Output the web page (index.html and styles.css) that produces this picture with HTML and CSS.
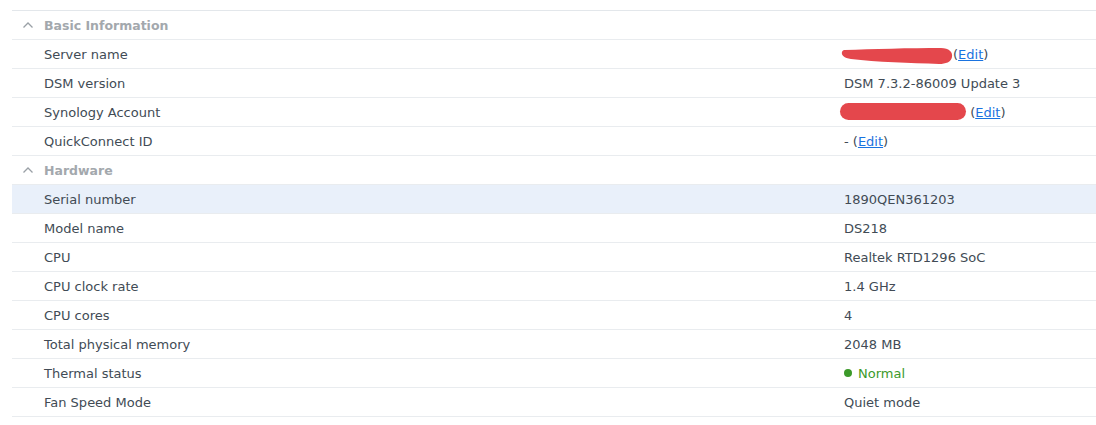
FILE: index.html
```html
<!DOCTYPE html>
<html>
<head>
<meta charset="utf-8">
<link rel="stylesheet" href="styles.css">
</head>
<body>
<div class="panel">
  <div class="section-head">
    <svg class="chev" width="12" height="8" viewBox="0 0 12 8"><path d="M1.5 6.5 L6 2 L10.5 6.5" fill="none" stroke="#9aa0a6" stroke-width="1.3"/></svg>
    <span>Basic Information</span>
  </div>
  <div class="row"><div class="label">Server name</div><div class="value"><svg class="redact r1" width="112" height="18" viewBox="0 0 112 18"><path d="M4 3 C30 2 70 1 100 1 C108 1 112 5 111 10 C110 15 105 17 98 17 C70 16 35 15 10 12 C3 11 0 8 1 5 C1.5 3.5 2.5 3 4 3 Z" fill="#e4474c"/></svg>(<a class="link">Edit</a>)</div></div>
  <div class="row"><div class="label">DSM version</div><div class="value">DSM 7.3.2-86009 Update 3</div></div>
  <div class="row"><div class="label">Synology Account</div><div class="value"><span class="redact r2"></span> (<a class="link">Edit</a>)</div></div>
  <div class="row"><div class="label">QuickConnect ID</div><div class="value">- (<a class="link">Edit</a>)</div></div>
  <div class="section-head">
    <svg class="chev" width="12" height="8" viewBox="0 0 12 8"><path d="M1.5 6.5 L6 2 L10.5 6.5" fill="none" stroke="#9aa0a6" stroke-width="1.3"/></svg>
    <span>Hardware</span>
  </div>
  <div class="row selected"><div class="label">Serial number</div><div class="value">1890QEN361203</div></div>
  <div class="row"><div class="label">Model name</div><div class="value">DS218</div></div>
  <div class="row"><div class="label">CPU</div><div class="value">Realtek RTD1296 SoC</div></div>
  <div class="row"><div class="label">CPU clock rate</div><div class="value">1.4 GHz</div></div>
  <div class="row"><div class="label">CPU cores</div><div class="value">4</div></div>
  <div class="row"><div class="label">Total physical memory</div><div class="value">2048 MB</div></div>
  <div class="row"><div class="label">Thermal status</div><div class="value status"><span class="dot"></span>Normal</div></div>
  <div class="row"><div class="label">Fan Speed Mode</div><div class="value">Quiet mode</div></div>
</div>
</body>
</html>
```
FILE: styles.css
```css
html, body {
  margin: 0;
  padding: 0;
  background: #ffffff;
}
body {
  font-family: "DejaVu Sans", Verdana, sans-serif;
  font-size: 13px;
  color: #414b55;
}
.panel {
  margin: 10px 0 0 12px;
  border-top: 1px solid #e3e7eb;
}
.section-head {
  height: 28px;
  border-bottom: 1px solid #e9ecef;
  display: flex;
  align-items: center;
  padding-left: 10px;
  font-weight: bold;
  color: #a3a8ad;
  font-size: 12.5px;
}
.chev {
  margin-right: 10px;
  margin-top: -1px;
}
.row {
  height: 28px;
  border-bottom: 1px solid #e9ecef;
  display: grid;
  grid-template-columns: 800px 1fr;
  align-items: center;
  padding-left: 32px;
}
.row.selected {
  background: #e9f0fa;
}
.value {
  display: flex;
  align-items: center;
  white-space: pre;
}
.link {
  color: #1a73e0;
  text-decoration: underline;
}
.redact {
  display: inline-block;
}
.r1 {
  margin-left: -3px;
  margin-top: 4px;
}
.r2 {
  width: 126px;
  height: 17px;
  margin-left: -4px;
  margin-top: -1px;
  background: #e4474c;
  border-radius: 9px;
}
.status {
  color: #3c9a2a;
}
.dot {
  display: inline-block;
  width: 8px;
  height: 8px;
  border-radius: 50%;
  background: #3c9a2a;
  margin-right: 6px;
}
```
